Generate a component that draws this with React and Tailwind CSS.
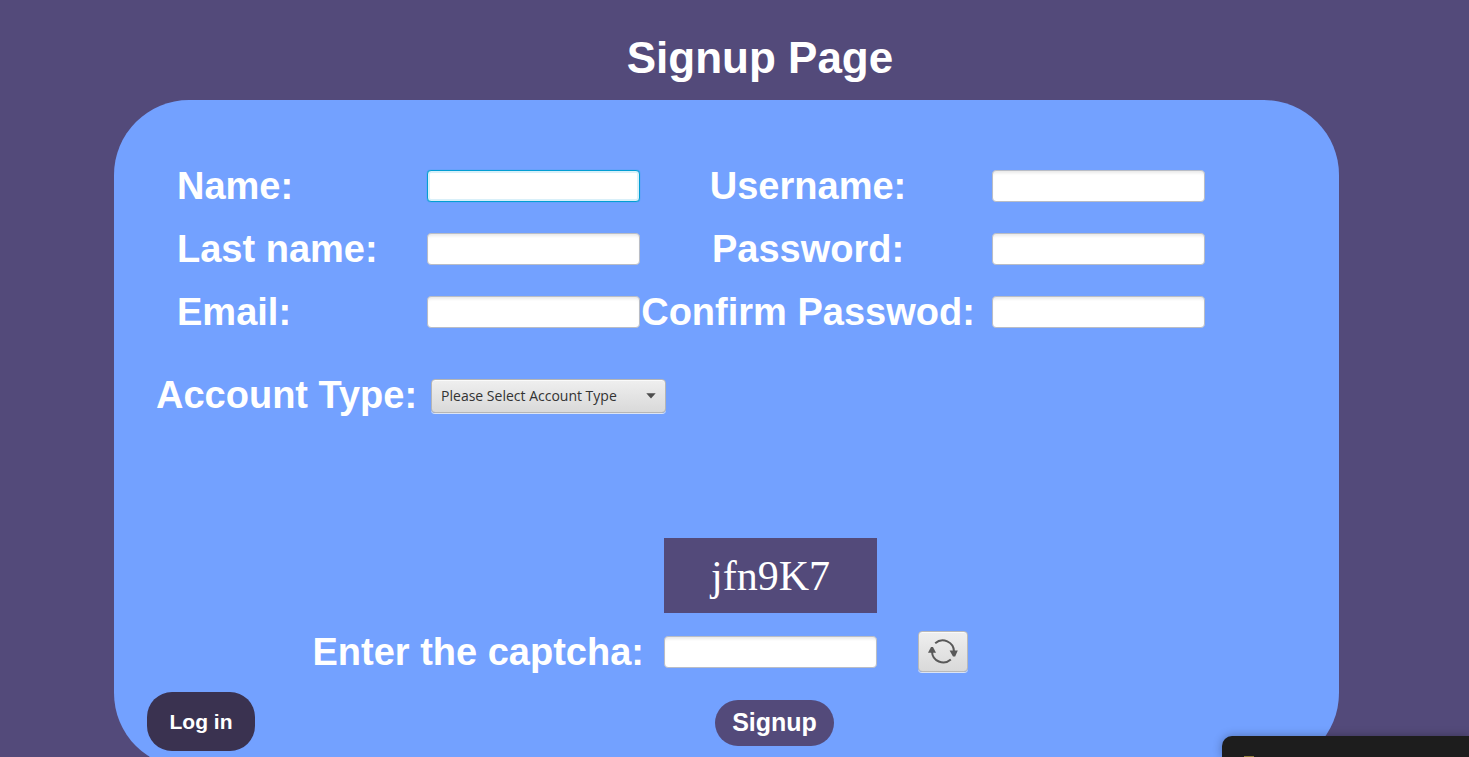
import React, { useState } from "react";

const labelClass =
  "whitespace-nowrap font-['Liberation_Sans',sans-serif] text-[38px] leading-8 font-bold text-white";

const fieldBase =
  "block h-8 w-full rounded-[4px] border bg-white px-2 text-sm text-[#333333] outline-none";

const plainField =
  "border-[#b9bdc6] shadow-[inset_0_3px_3px_-1px_rgba(0,0,0,0.09)]";

const activeField =
  "border-[#039ed3] shadow-[0_0_1px_#039ed3,inset_0_0_0_2px_#d9f0f9]";

function Field({ id, type = "text", active = false }) {
  return (
    <input
      id={id}
      name={id}
      type={type}
      className={`${fieldBase} ${active ? activeField : plainField}`}
    />
  );
}

function RefreshIcon() {
  return (
    <svg width="32" height="28" viewBox="0 0 32 28" fill="none" aria-hidden="true">
      <path d="M8.2 5.2A11.3 11.3 0 0 1 27 13.5" stroke="#595959" strokeWidth="2" />
      <path d="M23.8 21.6A11.3 11.3 0 0 1 5 13.5" stroke="#595959" strokeWidth="2" />
      <path d="M22.6 12.6H30.8L28.2 18.4H26Z" fill="#595959" />
      <path d="M1 14.8H9L6 9H4Z" fill="#595959" />
    </svg>
  );
}

export default function App() {
  const [captcha] = useState("jfn9K7");

  return (
    <main className="relative h-screen overflow-hidden bg-[#534a7a] font-['Liberation_Sans',sans-serif]">
      <h1 className="pt-8 pb-4 pl-[51px] text-center text-[44px] leading-[52px] font-bold text-white">
        Signup Page
      </h1>

      <form
        className="mr-[130px] ml-[114px] rounded-[75px] bg-[#73a1ff] pt-[70px] pb-[17px]"
        onSubmit={(event) => event.preventDefault()}
      >
        <div className="grid grid-cols-[250fr_213fr_352fr_213fr] items-center gap-y-[31px] pr-[134px] pl-[63px]">
          <label htmlFor="name" className={labelClass}>Name:</label>
          <Field id="name" active />
          <label htmlFor="username" className={`${labelClass} pr-4 text-center`}>Username:</label>
          <Field id="username" />

          <label htmlFor="lastname" className={labelClass}>Last name:</label>
          <Field id="lastname" />
          <label htmlFor="password" className={`${labelClass} pr-4 text-center`}>Password:</label>
          <Field id="password" type="password" />

          <label htmlFor="email" className={labelClass}>Email:</label>
          <Field id="email" />
          <label htmlFor="confirm" className={`${labelClass} pr-4 text-center`}>Confirm Passwod:</label>
          <Field id="confirm" type="password" />
        </div>

        <div className="mt-[51px] flex items-start gap-[14px] pl-[42px]">
          <label htmlFor="account" className={labelClass}>Account Type:</label>
          <div className="relative">
            <select
              id="account"
              defaultValue=""
              className="block h-[34px] w-[235px] appearance-none rounded-[4px] border border-[#b5b5b5] bg-linear-to-b from-[#efefef] to-[#d9d9d9] pr-8 pl-[9px] font-['Open_Sans',sans-serif] text-sm text-[#333333] shadow-[0_1px_0_#dbe4f5,inset_0_1px_0_#fafafa] outline-none"
            >
              <option value="">Please Select Account Type</option>
            </select>
            <svg
              className="pointer-events-none absolute top-[14px] right-[10px]"
              width="10"
              height="6"
              viewBox="0 0 10 6"
              aria-hidden="true"
            >
              <path d="M0.3 0.3H9.7L5 5.4Z" fill="#4d4d4d" />
            </svg>
          </div>
        </div>

        <div className="mt-[125px] grid grid-cols-[550fr_213fr_462fr] items-center">
          <output className="col-start-2 flex h-[75px] items-center justify-center bg-[#534a7a] font-['Liberation_Serif',serif] text-[42px] leading-none text-white">
            {captcha}
          </output>
        </div>

        <div className="mt-[18px] grid grid-cols-[550fr_213fr_462fr] items-center">
          <label htmlFor="captcha" className={`${labelClass} pr-5 text-right`}>
            Enter the captcha:
          </label>
          <Field id="captcha" />
          <button
            type="button"
            aria-label="Refresh captcha"
            className="ml-[41px] flex h-[41px] w-[50px] items-center justify-center rounded-[4px] border border-[#b9b9b9] bg-linear-to-b from-[#efefef] to-[#d9d9d9] shadow-[0_1px_0_#dbe4f5,inset_0_1px_0_#fafafa]"
          >
            <RefreshIcon />
          </button>
        </div>

        <div className="mt-5 grid grid-cols-[550fr_213fr_462fr] items-center">
          <button
            type="button"
            className="ml-[33px] h-[59px] w-[108px] rounded-[25px] bg-[#3a3250] text-[21px] font-bold text-white"
          >
            Log in
          </button>
          <div className="flex justify-center pt-0.5 pl-2">
            <button
              type="submit"
              className="h-[46px] w-[119px] rounded-full bg-[#534a7a] text-[25px] font-bold text-white"
            >
              Signup
            </button>
          </div>
        </div>
      </form>

      <aside className="absolute right-0 bottom-0 h-[21px] w-[247px] rounded-tl-[10px] bg-[#1d1d1d] shadow-[0_0_10px_rgba(0,0,0,0.3)]">
        <span className="absolute bottom-0 left-[22px] h-px w-[10px] bg-[#8f7d3c]" />
      </aside>
    </main>
  );
}
